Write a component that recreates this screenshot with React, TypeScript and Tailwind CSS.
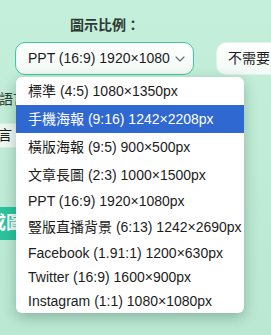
import React from "react";
import { ChevronDown } from "lucide-react";

interface SizeOption {
    label: string;
    cjk: boolean;
}

const SIZE_OPTIONS: SizeOption[] = [
    { label: "標準 (4:5) 1080×1350px", cjk: true },
    { label: "手機海報 (9:16) 1242×2208px", cjk: true },
    { label: "橫版海報 (9:5) 900×500px", cjk: true },
    { label: "文章長圖 (2:3) 1000×1500px", cjk: true },
    { label: "PPT (16:9) 1920×1080px", cjk: false },
    { label: "豎版直播背景 (6:13) 1242×2690px", cjk: true },
    { label: "Facebook (1.91:1) 1200×630px", cjk: false },
    { label: "Twitter (16:9) 1600×900px", cjk: false },
    { label: "Instagram (1:1) 1080×1080px", cjk: false },
];

const SELECTED = 1;

export default function App() {
    return (
        <div className="relative h-[335px] w-[271px] overflow-hidden bg-gradient-to-b from-[#c4efdb] to-[#bae8d3] font-['Liberation_Sans','Noto_Sans_CJK_TC',sans-serif] text-[14px] text-[#1c1c1c]">
            <div className="flex flex-col">
                <div className="pl-[70px] pt-[15px] h-[42px] font-bold text-[#2c3a34]">圖示比例：</div>

                <div className="flex items-center gap-[22px] pl-[15px]">
                    <div className="flex h-[33px] w-[179px] shrink-0 items-center justify-between rounded-[10px] border-[1.5px] border-[#3bc99e] bg-gradient-to-b from-white to-[#f1faf6] pl-[12px] pr-[5px]">
                        <span>PPT (16:9) 1920×1080</span>
                        <ChevronDown size={16} strokeWidth={1.75} className="text-[#6b6b6b]" />
                    </div>
                    <div className="flex h-[33px] w-[120px] shrink-0 items-center rounded-[10px] border-[1.5px] border-[#e2f1ea] bg-gradient-to-b from-white to-[#f1faf6] pl-[11px]">
                        <span>不需要</span>
                    </div>
                </div>

                <div className="mt-[14px] ml-[-1px] h-[20px] text-[#2c3a34]">語言</div>

                <div className="mt-[14px] ml-[-40px] flex h-[25px] w-[120px] items-center border border-[#dbeee5] bg-[#eef8f3] pl-[23px]">
                    語言
                </div>

                <div className="mt-[59px] ml-[-48px] flex h-[33px] w-[200px] items-center rounded-[10px] bg-gradient-to-r from-[#2ec6a0] to-[#25bb94] pl-[18px] text-[18px] font-bold text-white">
                    生成圖
                </div>
            </div>

            <div className="absolute left-[16px] top-[77px] w-[228px] overflow-hidden rounded-[6px] bg-white shadow-[0_4px_14px_rgba(0,40,20,0.28)]">
                {SIZE_OPTIONS.map((option, index) => (
                    <div
                        key={option.label}
                        className={`flex items-center pl-[12px] whitespace-nowrap ${option.cjk ? "h-[28px]" : "h-[24px]"} ${
                            index === SELECTED ? "bg-[#2f68d1] text-white" : "text-[#1c1c1c]"
                        }`}
                    >
                        {option.label}
                    </div>
                ))}
            </div>
        </div>
    );
}
